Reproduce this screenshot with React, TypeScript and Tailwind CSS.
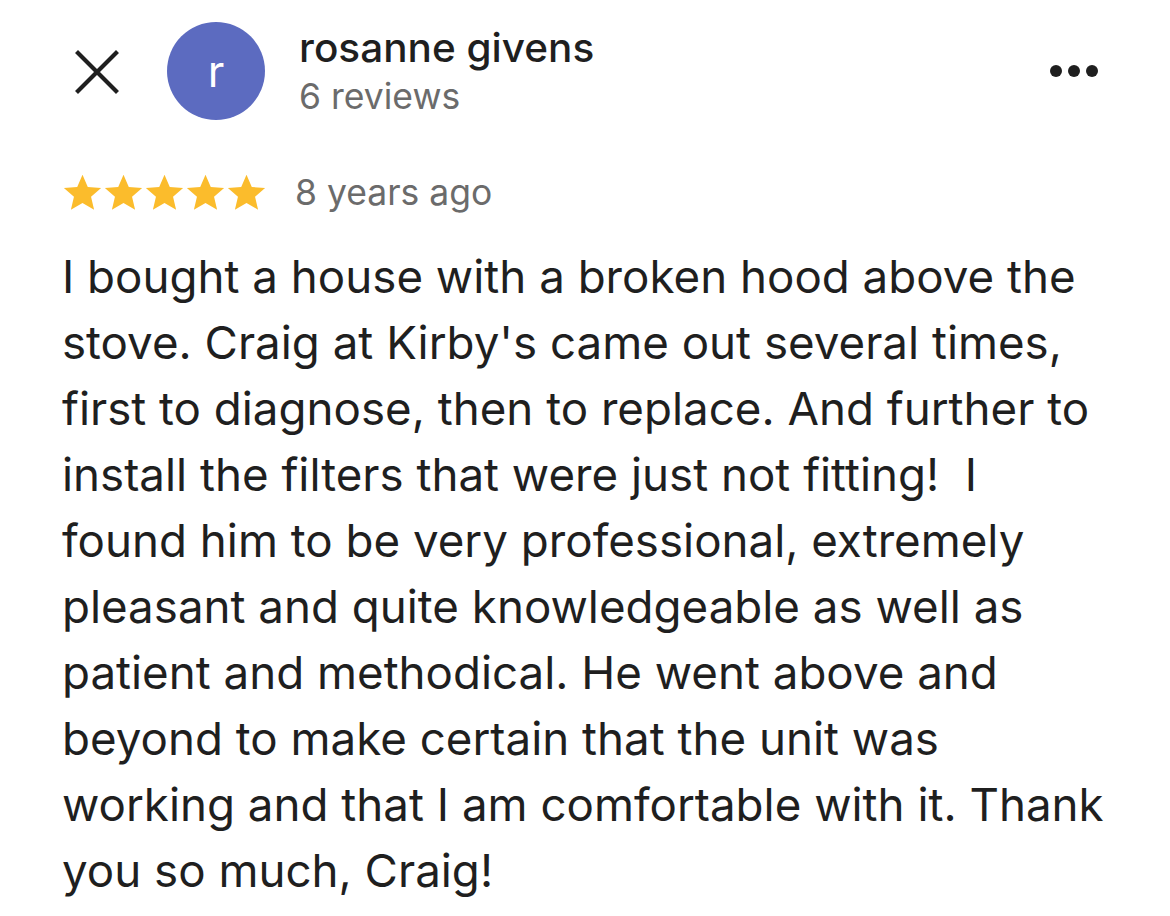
const Star = () => (
  <svg viewBox="0 0 24 24" className="w-[41px] h-[41px]" fill="#fbbc2c">
    <path d="M12 1.6l3.1 7.2 7.8.6-5.9 5.1 1.8 7.6L12 18.1l-6.8 4 1.8-7.6-5.9-5.1 7.8-.6z" />
  </svg>
);

const lines = [
  "I bought a house with a broken hood above the",
  "stove. Craig at Kirby's came out several times,",
  "first to diagnose, then to replace. And further to",
  "install the filters that were just not fitting!  I",
  "found him to be very professional, extremely",
  "pleasant and quite knowledgeable as well as",
  "patient and methodical. He went above and",
  "beyond to make certain that the unit was",
  "working and that I am comfortable with it. Thank",
  "you so much, Craig!",
];

export default function App() {
  return (
    <div className="w-[1170px] h-[916px] bg-white overflow-hidden font-['Inter',sans-serif] text-[#1f1f1f]">
      {/* header */}
      <div className="flex items-start pt-[22px] pl-[75px] pr-[72px]">
        <svg viewBox="0 0 44 44" className="mt-[28px] w-[44px] h-[44px]">
          <path d="M3 3L41 41M41 3L3 41" stroke="#1f1f1f" strokeWidth={4.2} strokeLinecap="square" />
        </svg>
        <div className="ml-[48px] w-[98px] h-[98px] rounded-full bg-[#5c6bc0] flex items-center justify-center text-white text-[44px] font-normal">
          r
        </div>
        <div className="ml-[34px] flex flex-col mt-[0px]">
          <span className="text-[40.5px] leading-[52px] font-medium text-[#1f1f1f]">rosanne givens</span>
          <span className="text-[35.5px] leading-[46px] text-[#6b6b6b]">6 reviews</span>
        </div>
        <div className="ml-auto mt-[43px] flex gap-[6px]">
          <span className="w-[12px] h-[12px] rounded-full bg-[#1f1f1f]" />
          <span className="w-[12px] h-[12px] rounded-full bg-[#1f1f1f]" />
          <span className="w-[12px] h-[12px] rounded-full bg-[#1f1f1f]" />
        </div>
      </div>

      {/* rating */}
      <div className="flex items-center pl-[62px] mt-[46px]">
        <div className="flex">
          <Star />
          <Star />
          <Star />
          <Star />
          <Star />
        </div>
        <span className="ml-[28px] text-[35.5px] text-[#6b6b6b]">8 years ago</span>
      </div>

      {/* body */}
      <div className="pl-[62px] mt-[25px] text-[45.7px] leading-[66px] text-[#1f1f1f]">
        {lines.map((l) => (
          <div key={l} className="whitespace-pre">
            {l}
          </div>
        ))}
      </div>
    </div>
  );
}
